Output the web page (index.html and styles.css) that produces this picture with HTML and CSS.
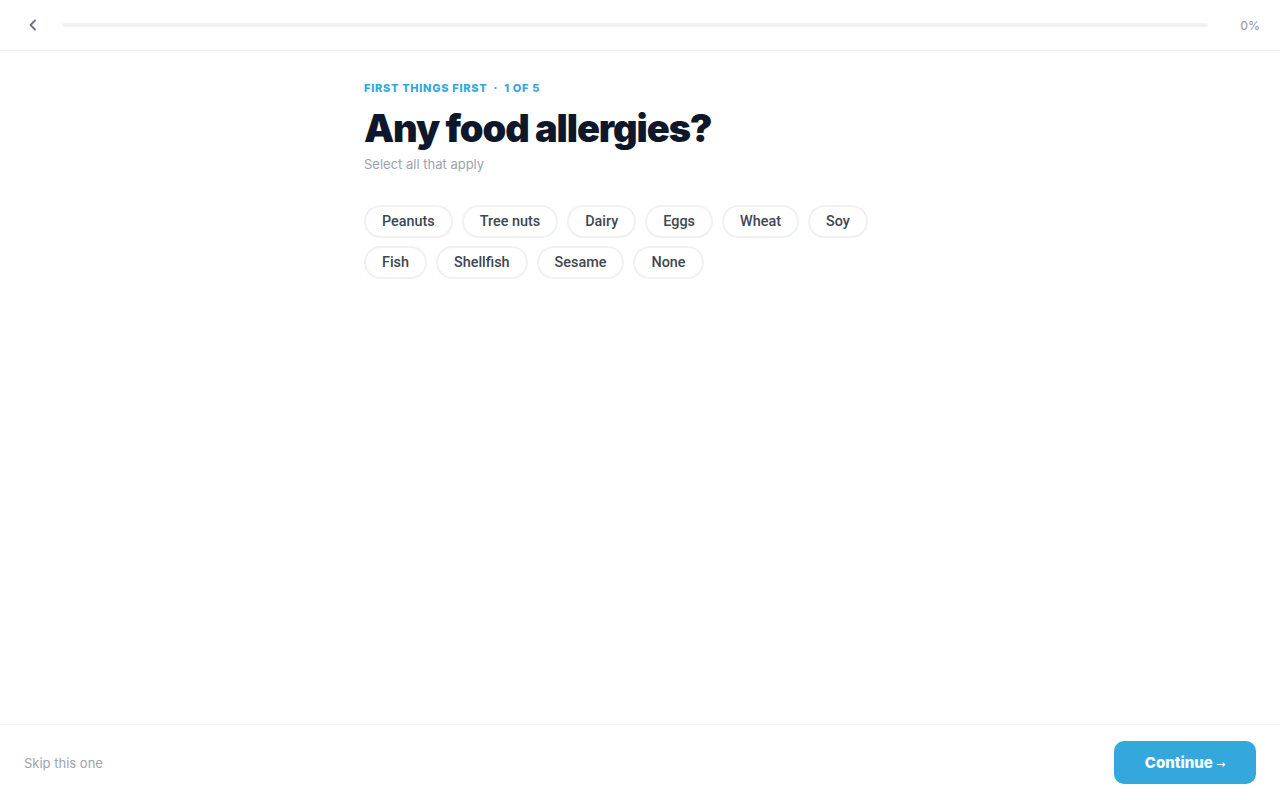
FILE: index.html
```html
<!DOCTYPE html>
<html>
	<head>
		<meta charset="UTF-8">
		<title>Any food allergies?</title>
		<link rel="stylesheet" href="styles.css">
	</head>
	<body>
		<div class="topbar">
			<button class="back" aria-label="Back">
				<svg width="16" height="16" viewBox="0 0 16 16" fill="none" stroke="#6b7280" stroke-width="1.8" stroke-linecap="round" stroke-linejoin="round"><path d="M10 3.5 5.5 8l4.5 4.5"/></svg>
			</button>
			<div class="track"><div class="fill" style="width: 0%"></div></div>
			<div class="pct">0%</div>
		</div>

		<div class="main">
			<div class="step">FIRST THINGS FIRST <span class="dot">·</span> 1 OF 5</div>
			<h1>Any food allergies?</h1>
			<p class="hint">Select all that apply</p>
			<div class="chips">
				<button class="chip">Peanuts</button>
				<button class="chip">Tree nuts</button>
				<button class="chip">Dairy</button>
				<button class="chip">Eggs</button>
				<button class="chip">Wheat</button>
				<button class="chip">Soy</button>
				<button class="chip">Fish</button>
				<button class="chip">Shellfish</button>
				<button class="chip">Sesame</button>
				<button class="chip">None</button>
			</div>
		</div>

		<div class="footer">
			<a class="skip" href="#">Skip this one</a>
			<button class="continue">Continue <span class="arrow">→</span></button>
		</div>
	</body>
</html>
```
FILE: styles.css
```css
* {
	margin: 0;
	padding: 0;
	box-sizing: border-box;
}
html, body {
	height: 100%;
}
body {
	font-family: Inter, "Liberation Sans", sans-serif;
	color: #111827;
	background: #fff;
	display: flex;
	flex-direction: column;
}
button {
	font-family: inherit;
	cursor: pointer;
	background: none;
	border: none;
}

.topbar {
	height: 51px;
	border-bottom: 1px solid #f0f1f3;
	display: flex;
	align-items: center;
	padding: 0 20px 0 25px;
	gap: 20px;
}
.back {
	width: 16px;
	height: 16px;
	display: flex;
}
.track {
	flex: 1;
	height: 4px;
	border-radius: 2px;
	background: #f0f1f3;
	margin-left: 1px;
}
.fill {
	height: 100%;
	background: #34a8dc;
	border-radius: 2px;
}
.pct {
	font-size: 12px;
	color: #9ca3af;
	font-weight: 500;
	width: 32px;
	text-align: right;
}

.main {
	flex: 1;
	width: 552px;
	margin: 0 auto;
	padding-top: 30px;
}
.step {
	font-size: 11px;
	font-weight: 800;
	letter-spacing: 0.7px;
	color: #34a8dc;
	line-height: 14px;
}
.step .dot {
	margin: 0 3px;
}
h1 {
	font-size: 38px;
	font-weight: 900;
	letter-spacing: -1.1px;
	color: #0f172a;
	line-height: 46px;
	margin-top: 10px;
}
.hint {
	font-size: 13px;
	color: #9ca3af;
	margin-top: 5px;
	line-height: 16px;
}
.chips {
	display: flex;
	flex-wrap: wrap;
	gap: 8px 9px;
	margin-top: 33px;
}
.chip {
	height: 33px;
	padding: 0 16px;
	border: 2px solid #f0f1f3;
	border-radius: 17px;
	font-family: Roboto, "Liberation Sans", sans-serif;
	font-size: 14.4px;
	font-weight: 500;
	color: #3f4654;
	background: #fff;
}

.footer {
	height: 76px;
	border-top: 1px solid #f0f1f3;
	display: flex;
	align-items: center;
	justify-content: space-between;
	padding: 0 24px;
}
.skip {
	font-size: 13px;
	color: #9ca3af;
	text-decoration: none;
}
.continue {
	width: 142px;
	height: 43px;
	border-radius: 10px;
	background: #34a8dc;
	color: #fff;
	font-size: 15px;
	font-weight: 800;
}
.continue .arrow {
	font-family: "DejaVu Sans", sans-serif;
	font-weight: 400;
	font-size: 11px;
}
```
